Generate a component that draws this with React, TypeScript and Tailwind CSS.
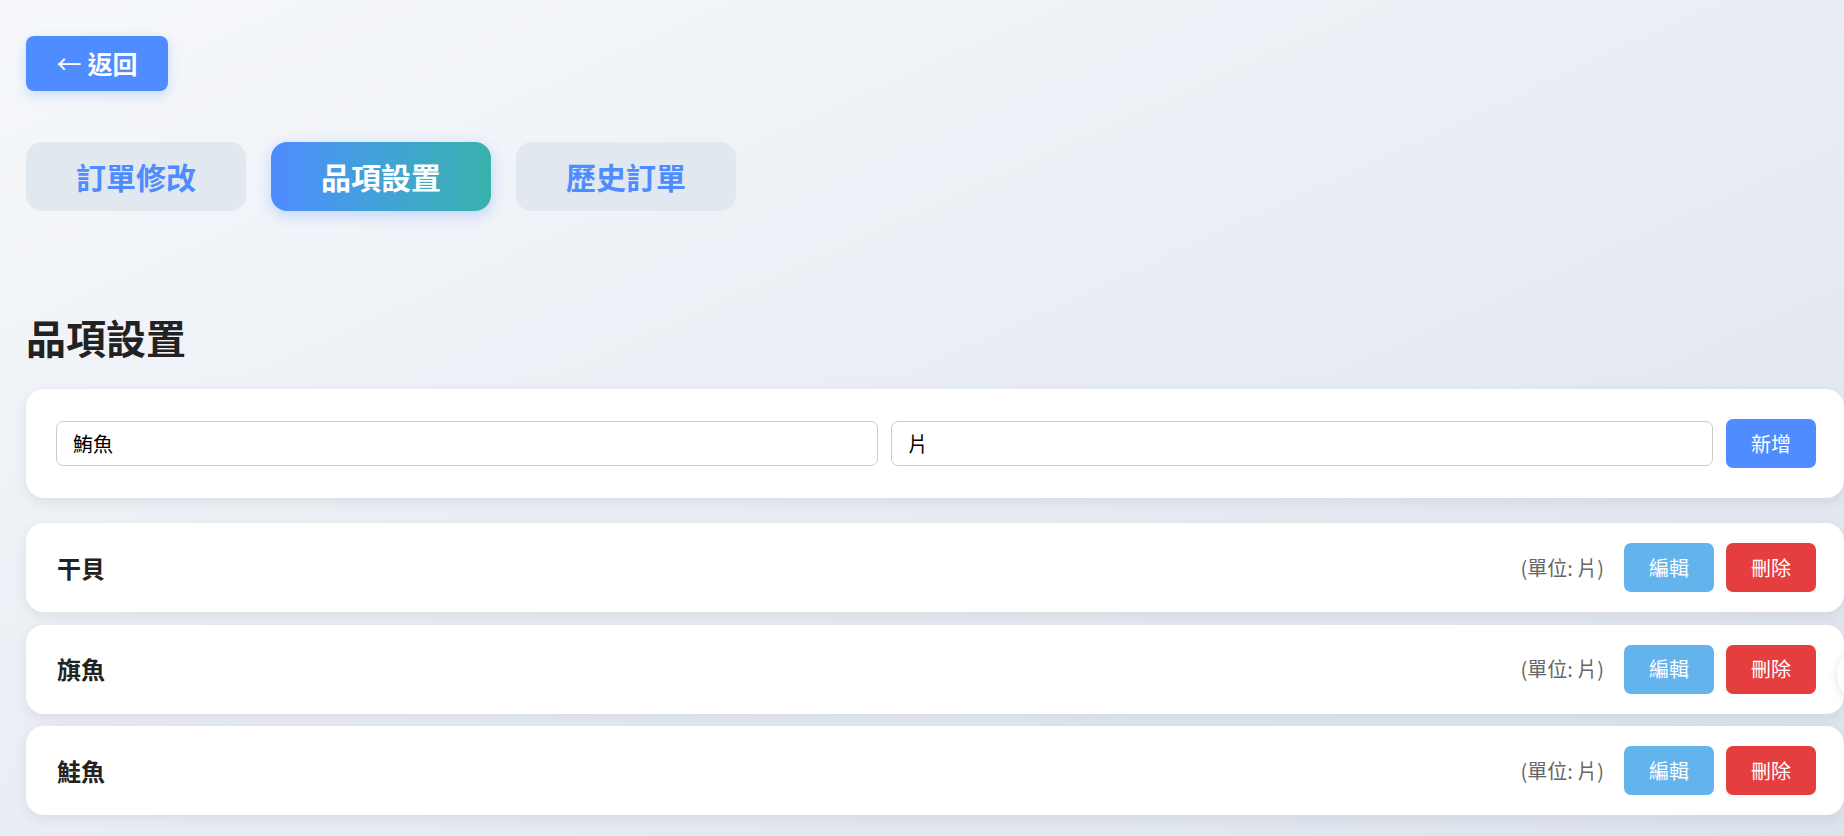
import React, { useState } from 'react';

type Item = { name: string; unit: string };

const initialItems: Item[] = [
  { name: '干貝', unit: '片' },
  { name: '旗魚', unit: '片' },
  { name: '鮭魚', unit: '片' },
];

const tabs = ['訂單修改', '品項設置', '歷史訂單'];

export default function App() {
  const [active, setActive] = useState(1);
  const [name, setName] = useState('鮪魚');
  const [unit, setUnit] = useState('片');
  const [items, setItems] = useState<Item[]>(initialItems);

  const addItem = () => {
    if (!name.trim()) return;
    setItems([...items, { name, unit }]);
    setName('');
  };

  return (
    <div
      className="relative min-h-screen overflow-hidden bg-gradient-to-br from-[#f6f8fb] to-[#dde3ed] pl-[26px] pt-[36px] pb-[20px] text-[#222]"
      style={{ fontFamily: '"Noto Sans CJK TC", "Noto Sans", sans-serif' }}
    >
      {/* 返回 */}
      <button className="flex h-[55px] w-[142px] items-center justify-center gap-[6px] rounded-[8px] bg-[#4f8cff] text-[25px] font-bold text-white shadow-[0_4px_12px_rgba(79,140,255,0.25)]">
        <span className="font-normal">←</span>
        <span>返回</span>
      </button>

      {/* tabs */}
      <div className="mt-[51px] flex gap-[25px]">
        {tabs.map((t, i) => (
          <button
            key={t}
            onClick={() => setActive(i)}
            className={
              i === active
                ? 'flex h-[69px] w-[220px] items-center justify-center rounded-[16px] bg-gradient-to-r from-[#4f8cff] to-[#38b2ac] text-[30px] font-bold text-white shadow-[0_4px_14px_rgba(79,140,255,0.3)]'
                : 'flex h-[69px] w-[220px] items-center justify-center rounded-[16px] bg-[#e2e8f0] text-[30px] font-bold text-[#4f8cff]'
            }
          >
            {t}
          </button>
        ))}
      </div>

      <h2 className="mt-[102px] text-[40px] font-bold leading-[48px] text-[#222]">品項設置</h2>

      {/* 新增表單 */}
      <div className="mt-[28px] flex items-center gap-[13px] rounded-[18px] bg-white py-[30px] pl-[30px] pr-[28px] shadow-[0_4px_14px_rgba(0,0,0,0.08)]">
        <input
          value={name}
          onChange={(e) => setName(e.target.value)}
          className="h-[45px] flex-1 rounded-[7px] border border-[#ccc] px-[16px] text-[20px] text-black outline-none"
        />
        <input
          value={unit}
          onChange={(e) => setUnit(e.target.value)}
          className="h-[45px] flex-1 rounded-[7px] border border-[#ccc] px-[16px] text-[20px] text-black outline-none"
        />
        <button
          onClick={addItem}
          className="h-[49px] w-[90px] rounded-[7px] bg-[#4f8cff] text-[20px] text-white"
        >
          新增
        </button>
      </div>

      {/* 品項列表 */}
      <div className="mt-[25px] flex flex-col gap-[12.5px]">
        {items.map((it, i) => (
          <div
            key={i}
            className="flex h-[89px] items-center rounded-[18px] bg-white pl-[31px] pr-[28px] shadow-[0_4px_14px_rgba(0,0,0,0.07)]"
          >
            <span className="flex-1 text-[24px] font-bold text-[#222]">{it.name}</span>
            <span className="mr-[20px] text-[20px] text-[#666]">(單位: {it.unit})</span>
            <div className="flex gap-[12px]">
              <button className="h-[49px] w-[90px] rounded-[7px] bg-[#63b3ed] text-[20px] text-white">編輯</button>
              <button
                onClick={() => setItems(items.filter((_, j) => j !== i))}
                className="h-[49px] w-[90px] rounded-[7px] bg-[#e53e3e] text-[20px] text-white"
              >
                刪除
              </button>
            </div>
          </div>
        ))}
      </div>

      {/* 右側浮動按鈕 */}
      <div className="absolute left-[1837px] top-[647px] h-[56px] w-[56px] rounded-full bg-white shadow-[0_2px_10px_rgba(0,0,0,0.12)]" />
    </div>
  );
}
